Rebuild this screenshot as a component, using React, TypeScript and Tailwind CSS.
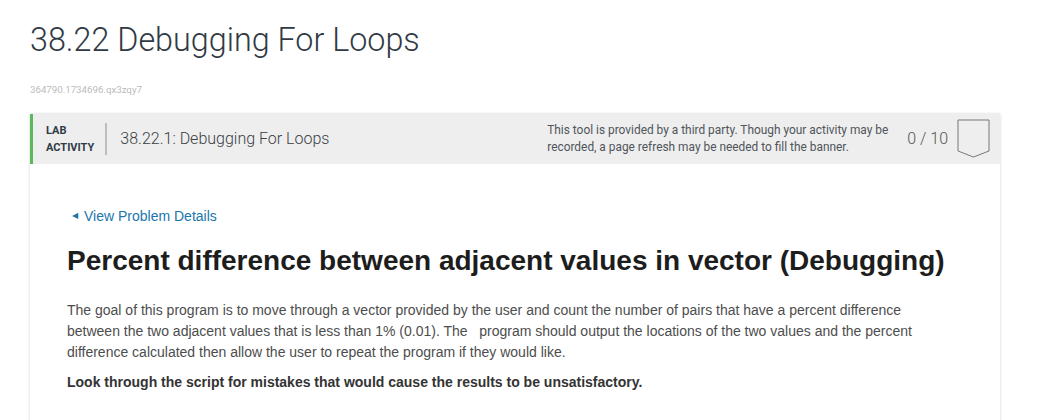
export default function App() {
    return (
        <div className="min-h-screen bg-white pl-[30px] pr-[40px] font-['Roboto',sans-serif]">
            <h1 className="pt-[21px] text-[32.3px] leading-[38px] font-light text-[#313a44]">38.22 Debugging For Loops</h1>
            <p className="mt-[25px] text-[9.7px] leading-[12px] text-[#bbbbbb]">364790.1734696.qx3zqy7</p>

            <div className="mt-[18px] bg-white shadow-[0_0_3px_rgba(0,0,0,0.18)]">
                <div className="flex h-[50px] items-center border-l-[3px] border-[#5cb85c] bg-[#eeeeee]">
                    <div className="pl-[13px] pr-[11px] text-[11px] font-bold leading-[17px] text-[#2f3b45]">
                        <div>LAB</div>
                        <div>ACTIVITY</div>
                    </div>
                    <div className="h-[32px] w-[2px] bg-[#bdbdbd]" />
                    <div className="pl-[13px] text-[16px] font-light text-[#3a3f44]">38.22.1: Debugging For Loops</div>
                    <div className="ml-auto w-[350px] text-[11.9px] leading-[17px] text-[#50555b]">
                        This tool is provided by a third party. Though your activity may be recorded, a page refresh may be needed to fill the banner.
                    </div>
                    <div className="ml-[10px] text-[16px] font-light text-[#555]">0 / 10</div>
                    <svg className="ml-[9px] mr-[10px]" width="33" height="40" viewBox="0 0 33 40">
                        <path d="M1 1 H32 V32 L16.5 38 L1 32 Z" fill="none" stroke="#777" strokeWidth="1" />
                    </svg>
                </div>

                <div className="px-[37px] pt-[42px] pb-[40px] font-['Liberation_Sans',Arial,sans-serif]">
                    <a className="flex items-center text-[14px] leading-[20px] text-[#1a76ab]" href="#">
                        <span className="ml-[5px] mr-[6px] text-[8px]">◀</span>
                        View Problem Details
                    </a>
                    <h2 className="mt-[19px] text-[28px] leading-[32px] font-bold text-[#1d1d1d]">
                        Percent difference between adjacent values in vector (Debugging)
                    </h2>
                    <p className="mt-[23px] max-w-[860px] text-[14px] leading-[21px] text-[#4d4d4d]">
                        The goal of this program is to move through a vector provided by the user and count the number of pairs that have a percent difference between the two adjacent values that is less than 1% (0.01). The &nbsp; program should output the locations of the two values and the percent difference calculated then allow the user to repeat the program if they would like.
                    </p>
                    <p className="mt-[9px] text-[14px] leading-[21px] font-bold text-[#333]">
                        Look through the script for mistakes that would cause the results to be unsatisfactory.
                    </p>
                </div>
            </div>
        </div>
    );
}
